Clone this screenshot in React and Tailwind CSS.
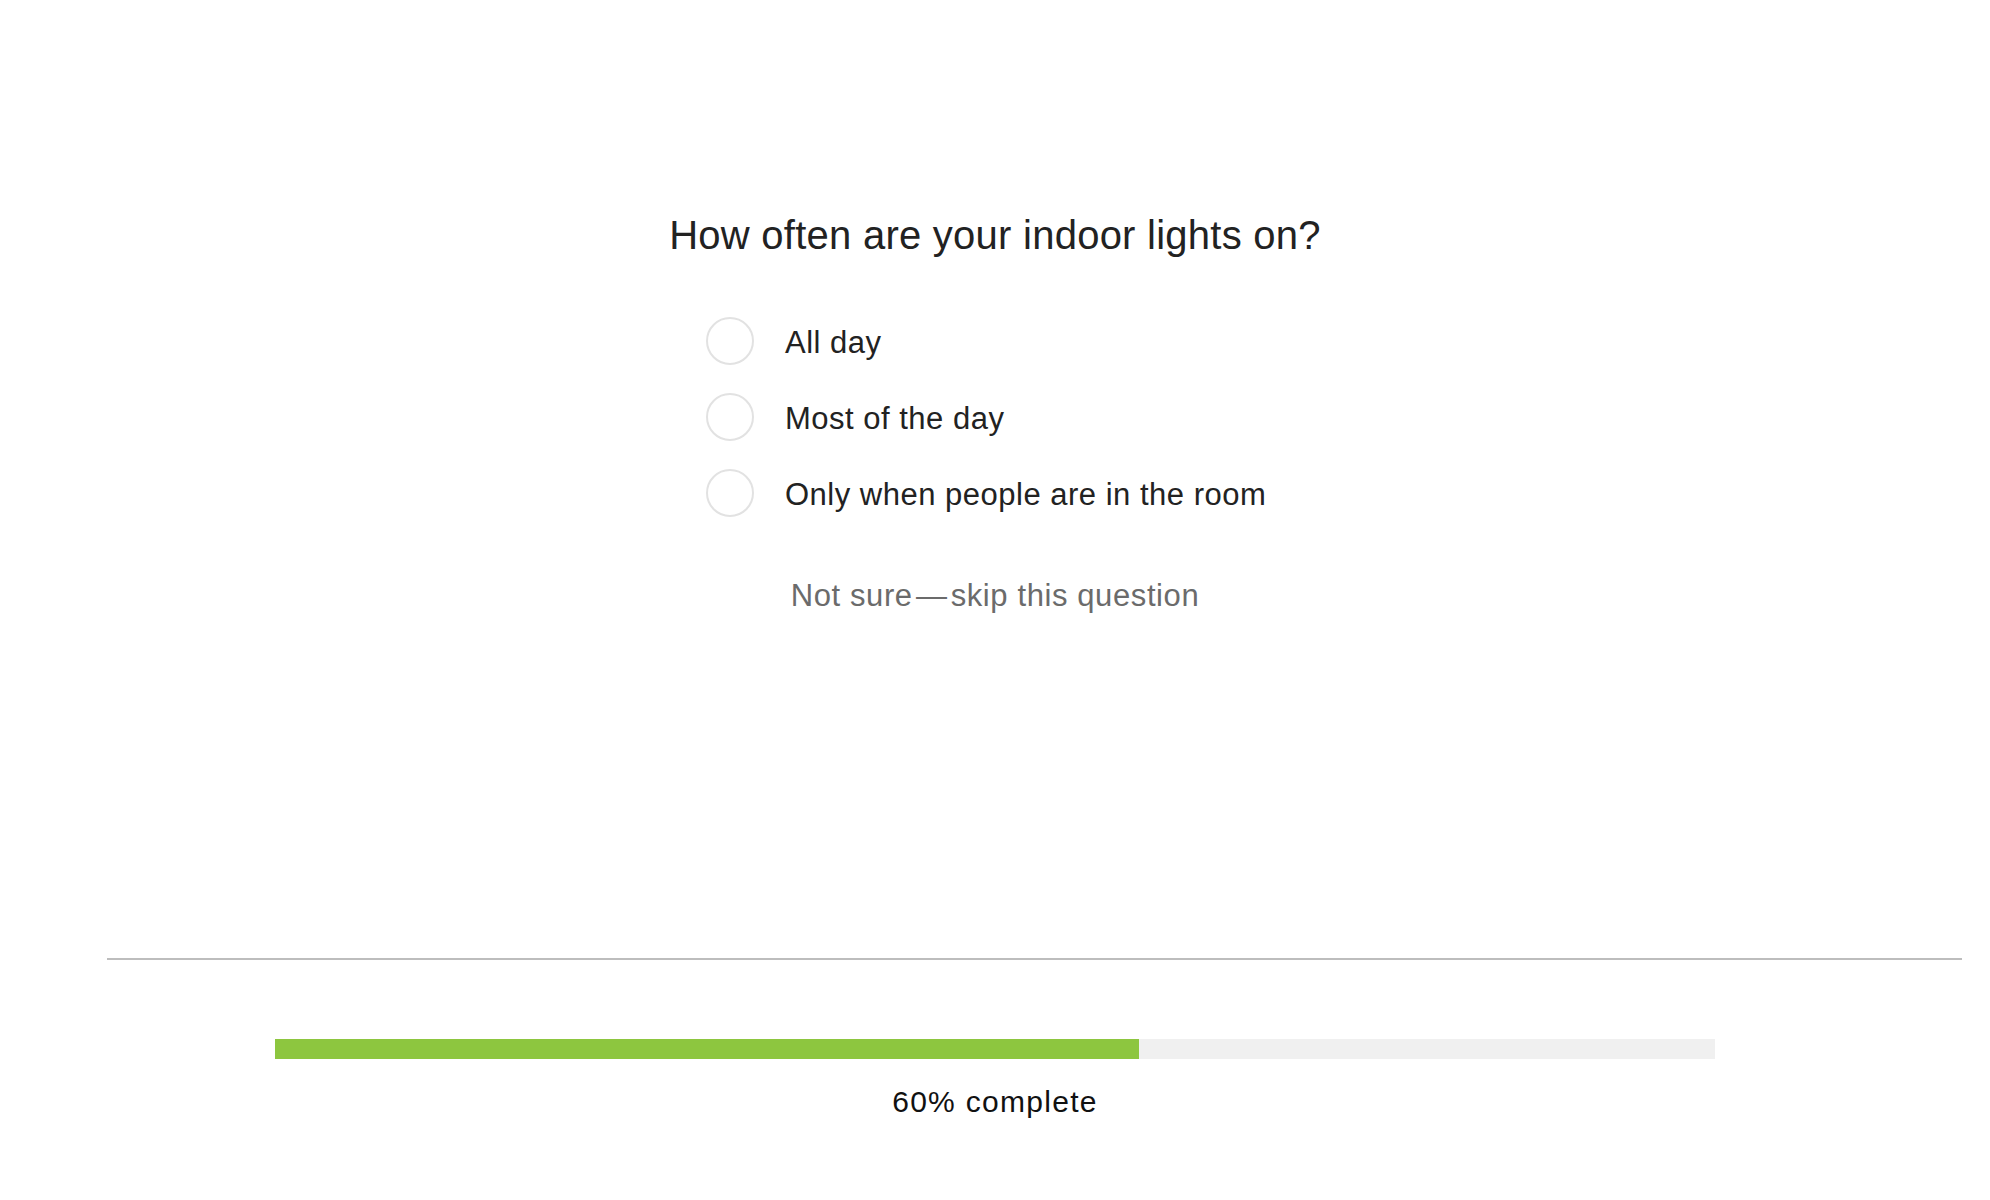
const options = ["All day", "Most of the day", "Only when people are in the room"];

const App = () => {
  return (
    <div
      className="min-h-[1200px] bg-white pt-[212px]"
      style={{ fontFamily: '"Liberation Sans", Arial, sans-serif' }}
    >
      <h1 className="text-center text-[40px] leading-[46px] tracking-[0.25px] text-[#222]">
        How often are your indoor lights on?
      </h1>

      <div className="mx-auto mt-[59px] flex w-[578px] flex-col gap-[28px]">
        {options.map((label) => (
          <label key={label} className="flex h-[48px] cursor-pointer items-center">
            <span className="h-[48px] w-[48px] shrink-0 rounded-full border-2 border-[#e2e2e2] bg-white" />
            <span className="ml-[31px] pt-[3px] text-[31px] leading-[48px] tracking-[0.5px] text-[#222]">
              {label}
            </span>
          </label>
        ))}
      </div>

      <p className="mt-[61px] text-center text-[31px] leading-[36px] tracking-[0.6px] text-[#6b6b6b]">
        Not sure{"\u200A—\u200A"}skip this question
      </p>

      <div className="ml-[107px] mr-[28px] mt-[344px] h-[2px] bg-[#bdbdbd]" />

      <div className="mx-auto mt-[79px] h-[20px] w-[1440px] bg-[#f0f0f0]">
        <div className="h-full w-[60%] bg-[#8dc63f]" />
      </div>

      <p className="mt-[26px] text-center text-[30px] leading-[34px] tracking-[1.3px] text-[#111]">
        60% complete
      </p>
    </div>
  );
};

export default App;
